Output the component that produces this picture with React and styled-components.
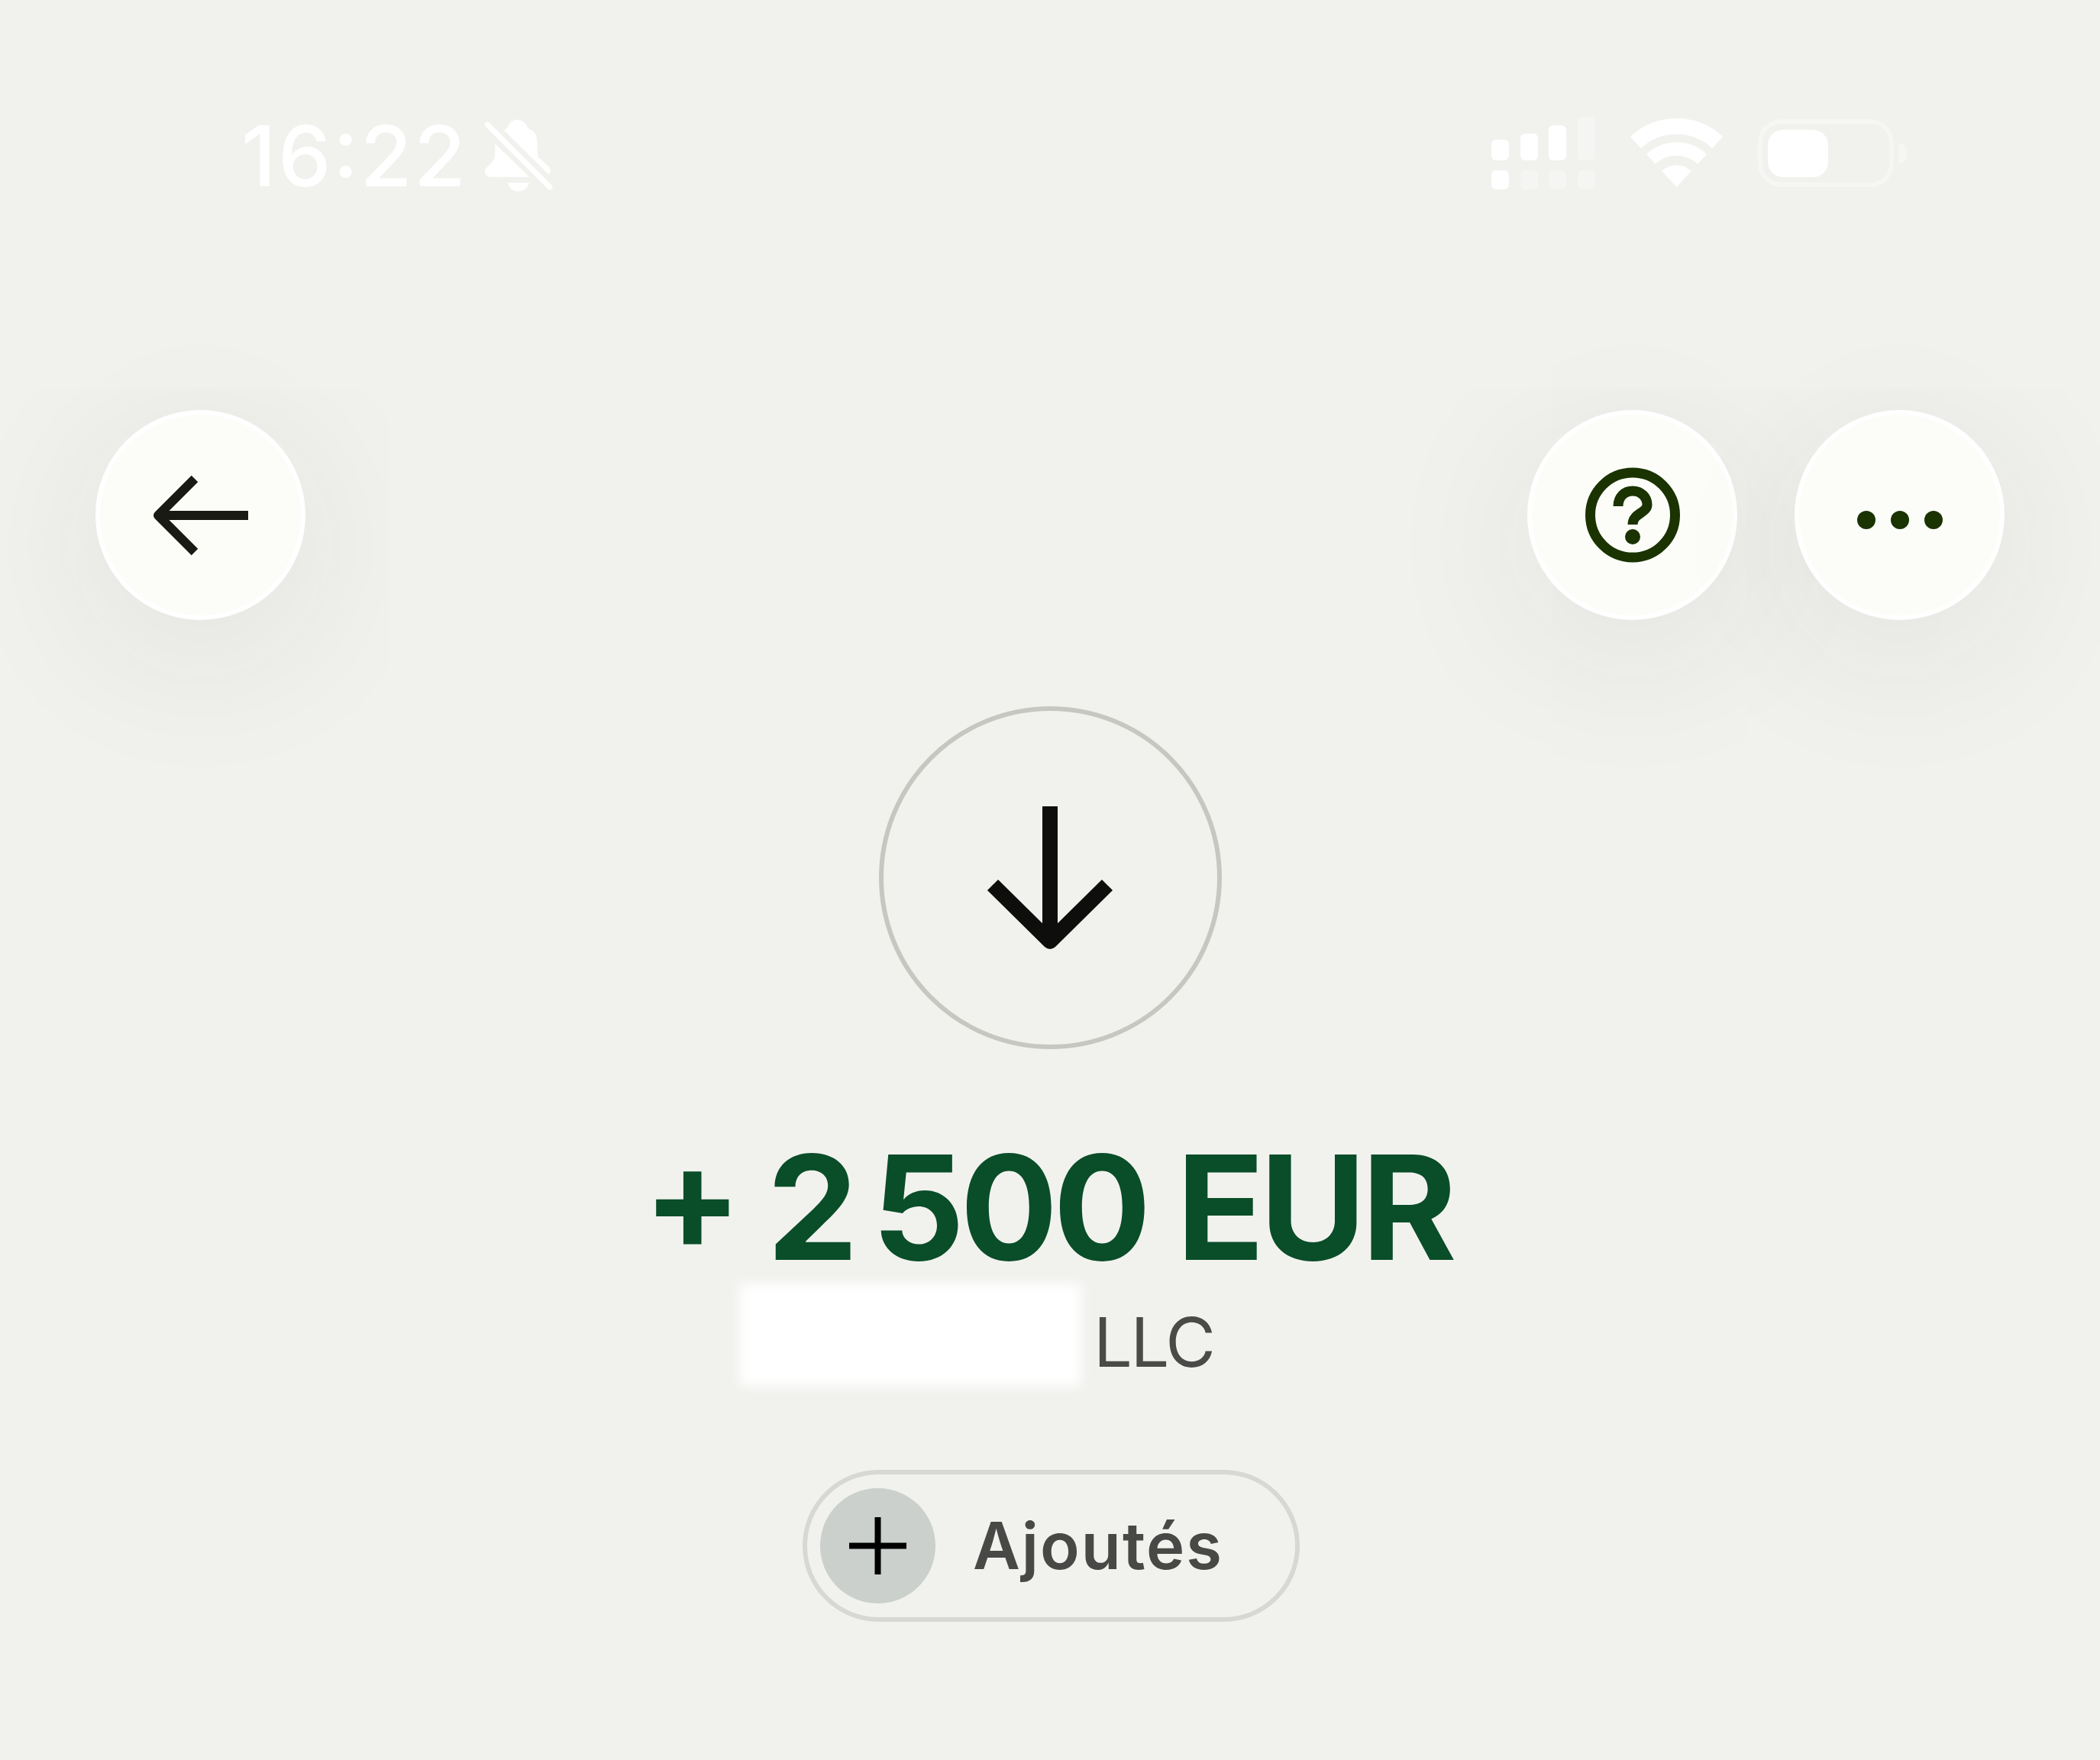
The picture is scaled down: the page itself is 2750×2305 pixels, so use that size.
import React from "react";
import styled, { createGlobalStyle } from "styled-components";

const Global = createGlobalStyle`
  html, body { margin: 0; padding: 0; background: #f1f2ee; }
  body { font-family: Inter, "Liberation Sans", sans-serif; }
`;

const Page = styled.div`
  width: 2750px;
  height: 2305px;
  background: #f1f2ee;
  display: flex;
  flex-direction: column;
  overflow: hidden;
`;

const StatusBar = styled.div`
  display: flex;
  justify-content: space-between;
  align-items: flex-start;
  padding: 149px 253px 0 316px;
`;

const TimeGroup = styled.div`
  display: flex;
  align-items: center;
  gap: 22px;
  color: #ffffff;
`;

const Time = styled.span`
  font-size: 110px;
  line-height: 110px;
  font-weight: 500;
  letter-spacing: 2.5px;
  font-feature-settings: "case" 1;
`;

const Indicators = styled.div`
  display: flex;
  align-items: center;
  gap: 47px;
  margin-top: 4px;
`;

const Icon = styled.svg`
  display: block;
  flex: none;
  overflow: visible;
`;

const MoreGlyph = styled(Icon)`
  margin-top: 12px;
`;

const Nav = styled.div`
  display: flex;
  justify-content: space-between;
  padding: 0 125px;
  margin-top: 278px;
`;

const NavGroup = styled.div`
  display: flex;
  gap: 75px;
`;

const RoundButton = styled.button`
  box-sizing: border-box;
  width: 275px;
  height: 275px;
  padding: 0;
  border: 6px solid #ffffff;
  border-radius: 50%;
  background: #fcfdf9;
  display: flex;
  align-items: center;
  justify-content: center;
  box-shadow: 0 40px 220px rgba(40, 45, 30, 0.09);
`;

const Hero = styled.div`
  display: flex;
  flex-direction: column;
  align-items: center;
  margin-top: 113px;
`;

const DirectionBadge = styled.div`
  box-sizing: border-box;
  width: 449px;
  height: 449px;
  border: 6px solid #c6c7c1;
  border-radius: 50%;
  display: flex;
  align-items: center;
  justify-content: center;
`;

const Amount = styled.div`
  margin-top: 112px;
  margin-right: 6px;
  font-size: 190px;
  line-height: 190px;
  font-weight: 700;
  letter-spacing: -6px;
  font-feature-settings: "case" 1;
  color: #0a4d29;
  white-space: pre;
`;

const CounterpartyRow = styled.div`
  align-self: flex-start;
  display: flex;
  align-items: flex-start;
  margin-left: 968px;
  color: #4a4b48;
`;

const Redaction = styled.div`
  width: 448px;
  height: 134px;
  margin-top: 5px;
  background: #ffffff;
  filter: blur(8px);
`;

const CompanySuffix = styled.span`
  margin-left: 16px;
  margin-top: 37px;
  font-size: 90px;
  line-height: 90px;
  font-weight: 400;
  letter-spacing: -2.5px;
`;

const StatusPill = styled.div`
  box-sizing: border-box;
  width: 651px;
  height: 199px;
  margin-top: 110px;
  margin-left: 3px;
  padding-left: 17px;
  border: 6px solid #d7d8d3;
  border-radius: 100px;
  display: flex;
  align-items: center;
  gap: 49px;
`;

const PillIcon = styled.div`
  width: 151px;
  height: 151px;
  border-radius: 50%;
  background: #cbd0cd;
  display: flex;
  align-items: center;
  justify-content: center;
`;

const PillLabel = styled.span`
  font-size: 85px;
  line-height: 85px;
  font-weight: 600;
  letter-spacing: 2px;
  color: #484946;
`;

const BellOff = () => (
  <Icon width="90" height="96" viewBox="0 0 90 96" fill="#fff">
    <path d="M26 14.7 C29 13 31 11 32.7 7.3 C35 3 39 .7 42.7 .7 C47 .7 52 3 55.3 7.3 L57.7 12.3 C65 15 69 20 69.3 28 L70 45 C70.5 50 72 51 73.7 52 L85 63 C88 66 87 70 84.3 72.3 Z" />
    <path d="M14.3 32.3 L59.3 75.7 H7.7 C2 75.7 -1 69 2 65 L12 54 C14 51 14.3 49 14.3 45 Z" />
    <path d="M31 83.3 H58.7 C57.5 90.5 51.5 94.7 45 94.7 C38 94.7 32 90.5 31 83.3 Z" />
    <path d="M4.3 7.3 L86 89" stroke="#fff" strokeWidth="7" strokeLinecap="round" />
  </Icon>
);

const bars = [
  [0, 30, 27, 1],
  [38, 22, 35, 1],
  [75, 11, 46, 1],
  [113, 0, 57, 0.3],
  [0, 70, 25, 1],
  [38, 70, 25, 0.3],
  [75, 70, 25, 0.3],
  [113, 70, 25, 0.3],
];

const Signal = () => (
  <Icon width="136" height="95" viewBox="0 0 136 95" fill="#fff">
    {bars.map(([x, y, h, o]) => (
      <rect key={`${x}-${y}`} x={x} y={y} width="23" height={h} rx="6" opacity={o} />
    ))}
  </Icon>
);

const Wifi = () => (
  <Icon width="119" height="89" viewBox="0 0 119 89" fill="#fff" stroke="#fff" strokeWidth="1.5" strokeLinejoin="round">
    <path d="M0 23 A88 88 0 0 1 119 23 L106.1 37.2 A69 69 0 0 0 12.9 37.2 Z" />
    <path d="M21 46 A57 57 0 0 1 98 46 L87.2 57.8 A41 41 0 0 0 31.8 57.8 Z" />
    <path d="M41.3 68.1 A27 27 0 0 1 77.7 68.1 L59.5 88 Z" />
  </Icon>
);

const Battery = () => (
  <Icon width="195" height="89" viewBox="0 0 195 89" fill="#fff">
    <rect x="3" y="3" width="172" height="83" rx="28" fill="none" stroke="#fff" strokeOpacity="0.35" strokeWidth="6" />
    <rect x="13" y="14" width="79" height="62" rx="20" />
    <path d="M184 31 C191 32 195 37 195 45 C195 53 191 58 184 59 Z" opacity="0.35" />
  </Icon>
);

const BackArrow = () => (
  <Icon width="125" height="106" viewBox="0 0 125 106" fill="none" stroke="#191a14" strokeWidth="12" strokeLinejoin="round">
    <path d="M125 53 H7 M55 5 L7 53 L55 101" />
  </Icon>
);

const HelpIcon = () => (
  <Icon width="124" height="125" viewBox="0 0 124 125" fill="none" stroke="#1a3300" strokeWidth="13">
    <circle cx="62" cy="62.5" r="55.5" />
    <path d="M43 51 C43 39 51 31 62 31 C73 31 81 39 81 49 C81 60 62 60 62 75" />
    <circle cx="62" cy="91" r="10" fill="#1a3300" stroke="none" />
  </Icon>
);

const MoreIcon = () => (
  <MoreGlyph width="112" height="24" viewBox="0 0 112 24" fill="#1a3300">
    <circle cx="12" cy="12" r="12" />
    <circle cx="56" cy="12" r="12" />
    <circle cx="100" cy="12" r="12" />
  </MoreGlyph>
);

const DownArrow = () => (
  <Icon width="170" height="200" viewBox="0 0 170 200" fill="none" stroke="#0e0f0c" strokeWidth="20" strokeLinejoin="round">
    <path d="M85 6 V183 M10 109 L85 183 L160 109" />
  </Icon>
);

const PlusIcon = () => (
  <Icon width="75" height="75" viewBox="0 0 75 75" fill="none" stroke="#000" strokeWidth="8">
    <path d="M37.5 0 V75 M0 37.5 H75" />
  </Icon>
);

export default function App() {
  return (
    <Page>
      <Global />
      <StatusBar>
        <TimeGroup>
          <Time>16:22</Time>
          <BellOff />
        </TimeGroup>
        <Indicators>
          <Signal />
          <Wifi />
          <Battery />
        </Indicators>
      </StatusBar>
      <Nav>
        <RoundButton aria-label="Retour"><BackArrow /></RoundButton>
        <NavGroup>
          <RoundButton aria-label="Aide"><HelpIcon /></RoundButton>
          <RoundButton aria-label="Plus"><MoreIcon /></RoundButton>
        </NavGroup>
      </Nav>
      <Hero>
        <DirectionBadge><DownArrow /></DirectionBadge>
        <Amount>{"+ 2\u202F500 EUR"}</Amount>
        <CounterpartyRow>
          <Redaction />
          <CompanySuffix>LLC</CompanySuffix>
        </CounterpartyRow>
        <StatusPill>
          <PillIcon><PlusIcon /></PillIcon>
          <PillLabel>Ajoutés</PillLabel>
        </StatusPill>
      </Hero>
    </Page>
  );
}
